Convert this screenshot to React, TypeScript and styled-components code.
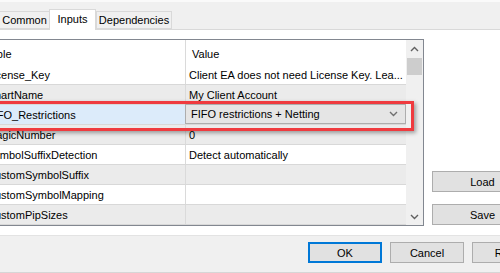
import React from 'react';
import styled, { createGlobalStyle } from 'styled-components';

const GlobalStyle = createGlobalStyle`
  body {
    margin: 0;
    background: #f0f0f0;
    font-family: "Liberation Sans", Arial, sans-serif;
    font-size: 11px;
    color: #000;
    overflow: hidden;
  }
`;

const Window = styled.div`
  width: 500px;
  height: 273px;
  overflow: hidden;
  display: flex;
  flex-direction: column;
  border-top: 2px solid #fafafa;
  box-sizing: border-box;
`;

const TabBar = styled.div`
  height: 28px;
  display: flex;
  align-items: flex-end;
  border-bottom: 1px solid #d9d9d9;
  box-sizing: border-box;
  margin-left: -1px;
`;

const Tab = styled.div<{ $active?: boolean; $width: number }>`
  width: ${(p) => p.$width}px;
  height: ${(p) => (p.$active ? 21 : 18)}px;
  margin-bottom: ${(p) => (p.$active ? -1 : 0)}px;
  margin-left: ${(p) => (p.$active ? -1 : 0)}px;
  box-sizing: border-box;
  border: 1px solid #d9d9d9;
  border-bottom: ${(p) => (p.$active ? 'none' : '1px solid #d9d9d9')};
  background: ${(p) => (p.$active ? '#fff' : '#f0f0f0')};
  display: flex;
  align-items: center;
  justify-content: center;
  padding-bottom: ${(p) => (p.$active ? 3 : 0)}px;
  position: relative;
  z-index: ${(p) => (p.$active ? 1 : 0)};
`;

const Panel = styled.div`
  height: 206px;
  background: #fff;
  border-bottom: 1px solid #e3e3e3;
  box-sizing: border-box;
  display: flex;
  padding-top: 9px;
`;

const Grid = styled.div`
  position: relative;
  margin-left: -41px;
  width: 465px;
  height: 187px;
  box-sizing: border-box;
  border: 1px solid #828790;
  display: flex;
`;

const List = styled.div`
  width: 446px;
  display: flex;
  flex-direction: column;
`;

const Row = styled.div<{ $odd?: boolean; $header?: boolean }>`
  display: grid;
  grid-template-columns: 226px 220px;
  height: ${(p) => (p.$header ? 25 : 20)}px;
  box-sizing: border-box;
  border-bottom: ${(p) => (p.$header ? 'none' : '1px solid #d8d8d8')};
  background: ${(p) => (p.$odd ? '#ebebeb' : '#fff')};
`;

const NameCell = styled.div<{ $header?: boolean; $selected?: boolean }>`
  padding-left: ${(p) => (p.$header ? 12 : 27)}px;
  padding-top: ${(p) => (p.$header ? 2 : 0)}px;
  border-right: 1px solid #dadada;
  background: ${(p) => (p.$selected ? '#dcebfa' : 'transparent')};
  display: flex;
  align-items: center;
  white-space: nowrap;
  overflow: hidden;
`;

const ValueCell = styled.div<{ $header?: boolean }>`
  padding-left: ${(p) => (p.$header ? 6 : 3)}px;
  padding-top: ${(p) => (p.$header ? 2 : 0)}px;
  display: flex;
  align-items: center;
  white-space: nowrap;
  overflow: hidden;
`;

const Combo = styled.div`
  margin-left: -1px;
  height: 20px;
  margin-top: -1px;
  box-sizing: border-box;
  background: #e5e5e5;
  border: 1px solid #adadad;
  display: flex;
  align-items: center;
  justify-content: space-between;
  padding: 0 7px 0 5px;
`;

const ScrollBar = styled.div`
  width: 17px;
  background: #f0f0f0;
  display: flex;
  flex-direction: column;
  align-items: center;
`;

const ScrollArrow = styled.div`
  width: 17px;
  height: 17px;
  display: flex;
  align-items: center;
  justify-content: center;
`;

const Thumb = styled.div`
  width: 15px;
  height: 17px;
  margin-top: 1px;
  background: #cdcdcd;
`;

const Track = styled.div`
  flex: 1;
`;

const Highlight = styled.div`
  position: absolute;
  left: -2px;
  top: 61px;
  width: 456px;
  height: 30px;
  box-sizing: border-box;
  border: 3px solid #ef3b3f;
  box-shadow: 2px 2px 4px rgba(0, 0, 0, 0.35);
  pointer-events: none;
`;

const SideButtons = styled.div`
  display: flex;
  flex-direction: column;
  gap: 12px;
  margin-left: 8px;
  padding-top: 132px;
`;

const Button = styled.div<{ $primary?: boolean; $width: number }>`
  width: ${(p) => p.$width}px;
  height: 21px;
  flex-shrink: 0;
  box-sizing: border-box;
  background: #e1e1e1;
  border: ${(p) => (p.$primary ? '2px solid #0078d7' : '1px solid #adadad')};
  display: flex;
  align-items: center;
  justify-content: center;
`;

const Footer = styled.div`
  flex: 1;
  display: flex;
  gap: 8px;
  padding: 6px 0 0 308px;
  box-sizing: border-box;
  border-bottom: 1px solid #d6d6d6;
`;

const Chevron = ({ up, color = '#606060' }: { up?: boolean; color?: string }) => (
  <svg width="9" height="6" viewBox="0 0 9 6">
    <path
      d={up ? 'M1 5 L4.5 1.5 L8 5' : 'M1 1 L4.5 4.5 L8 1'}
      fill="none"
      stroke={color}
      strokeWidth="1.4"
    />
  </svg>
);

const rows: Array<[string, string]> = [
  ['License_Key', 'Client EA does not need License Key. Lea...'],
  ['ChartName', 'My Client Account'],
  ['FIFO_Restrictions', 'FIFO restrictions + Netting'],
  ['MagicNumber', '0'],
  ['SymbolSuffixDetection', 'Detect automatically'],
  ['CustomSymbolSuffix', ''],
  ['CustomSymbolMapping', ''],
  ['CustomPipSizes', ''],
];

export default function App() {
  return (
    <>
      <GlobalStyle />
      <Window>
        <TabBar>
          <Tab $width={51}>Common</Tab>
          <Tab $active $width={47}>Inputs</Tab>
          <Tab $width={76}>Dependencies</Tab>
        </TabBar>
        <Panel>
          <Grid>
            <List>
              <Row $header>
                <NameCell $header>Variable</NameCell>
                <ValueCell $header>Value</ValueCell>
              </Row>
              {rows.map(([name, value], i) => (
                <Row key={name} $odd={i % 2 === 1}>
                  <NameCell $selected={i === 2}>{name}</NameCell>
                  {i === 2 ? (
                    <Combo>
                      <span>{value}</span>
                      <Chevron color="#707070" />
                    </Combo>
                  ) : (
                    <ValueCell>{value}</ValueCell>
                  )}
                </Row>
              ))}
            </List>
            <ScrollBar>
              <ScrollArrow>
                <Chevron up />
              </ScrollArrow>
              <Thumb />
              <Track />
              <ScrollArrow>
                <Chevron />
              </ScrollArrow>
            </ScrollBar>
            <Highlight />
          </Grid>
          <SideButtons>
            <Button $width={101}>Load</Button>
            <Button $width={101}>Save</Button>
          </SideButtons>
        </Panel>
        <Footer>
          <Button $primary $width={74}>OK</Button>
          <Button $width={74}>Cancel</Button>
          <Button $width={74}>Reset</Button>
        </Footer>
      </Window>
    </>
  );
}
